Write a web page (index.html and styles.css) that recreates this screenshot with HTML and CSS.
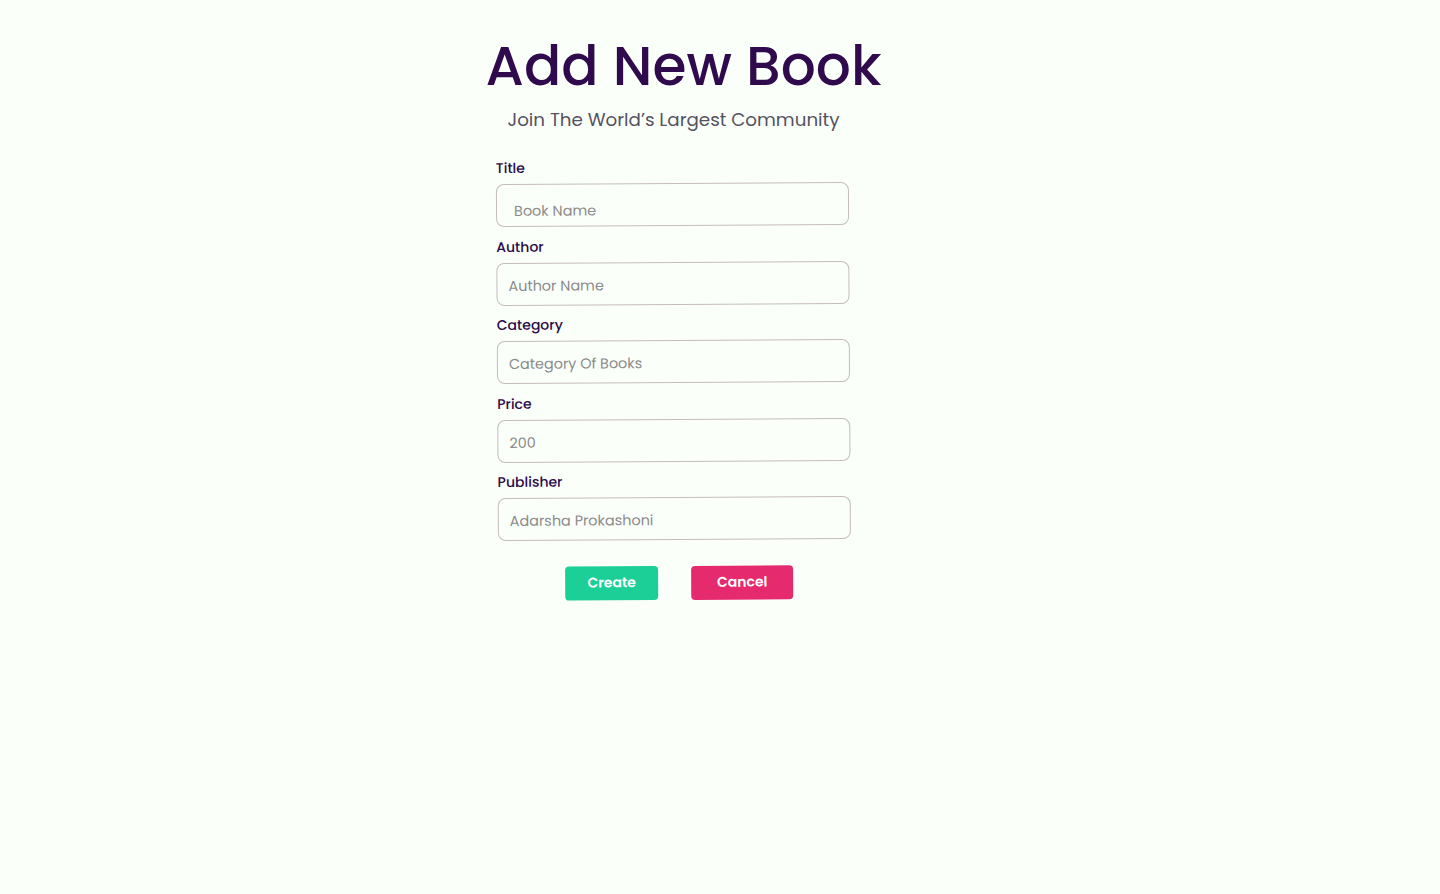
FILE: index.html
```html
<!DOCTYPE html>
<html lang="en">
<head>
<meta charset="utf-8">
<title>Add New Book</title>
<link rel="stylesheet" href="styles.css">
</head>
<body>
<main class="page">
  <h1 class="heading">Add New Book</h1>
  <p class="subtitle">Join The World’s Largest Community</p>
  <form class="form">
    <div class="field">
      <label class="label" for="title">Title</label>
      <input class="input input-title" id="title" type="text" placeholder="Book Name">
    </div>
    <div class="field">
      <label class="label" for="author">Author</label>
      <input class="input" id="author" type="text" placeholder="Author Name">
    </div>
    <div class="field">
      <label class="label" for="category">Category</label>
      <input class="input" id="category" type="text" placeholder="Category Of Books">
    </div>
    <div class="field">
      <label class="label" for="price">Price</label>
      <input class="input" id="price" type="text" placeholder="200">
    </div>
    <div class="field">
      <label class="label" for="publisher">Publisher</label>
      <input class="input" id="publisher" type="text" placeholder="Adarsha Prokashoni">
    </div>
    <div class="actions">
      <button class="btn btn-create" type="button">Create</button>
      <button class="btn btn-cancel" type="button">Cancel</button>
    </div>
  </form>
</main>
</body>
</html>
```
FILE: styles.css
```css
html, body {
  margin: 0;
  padding: 0;
  background: #fbfffa;
}
body {
  font-family: "Poppins", Inter, "Noto Sans", sans-serif;
  min-height: 894px;
}
.page {
  display: flex;
  flex-direction: column;
  align-items: center;
  padding: 30px 93px 0 0;
}
.heading {
  margin: 0 0 0 20px;
  font-size: 55px;
  font-weight: 500;
  line-height: 72px;
  color: #2f0b4e;
  letter-spacing: 0;
}
.subtitle {
  margin: 5px 0 0 0;
  font-size: 18.3px;
  line-height: 26px;
  color: #55525f;
}
.form {
  width: 353px;
  margin-top: 25px;
  display: flex;
  flex-direction: column;
  gap: 10.5px;
  transform: rotate(-0.33deg);
}
.field {
  display: flex;
  flex-direction: column;
  gap: 7px;
}
.label {
  font-size: 14px;
  font-weight: 500;
  line-height: 18px;
  color: #2b0a48;
}
.input {
  box-sizing: border-box;
  height: 43px;
  border: 1px solid #c3bdbd;
  border-radius: 8px;
  background: transparent;
  padding: 4px 12px 0 11px;
  font-family: inherit;
  font-size: 14.4px;
  color: #333;
  outline: none;
}
.input-title {
  padding: 12px 17px 0;
}
.input::placeholder {
  color: #8b8b8b;
}
.actions {
  display: flex;
  justify-content: center;
  gap: 33px;
  margin-top: 15px;
  padding-left: 9px;
}
.btn {
  border: none;
  border-radius: 4px;
  height: 34px;
  font-family: inherit;
  font-size: 14px;
  font-weight: 600;
  color: #ffffff;
  cursor: pointer;
}
.btn-create {
  width: 93px;
  background: #1ccf97;
}
.btn-cancel {
  width: 102px;
  background: #e62a6e;
}
```
